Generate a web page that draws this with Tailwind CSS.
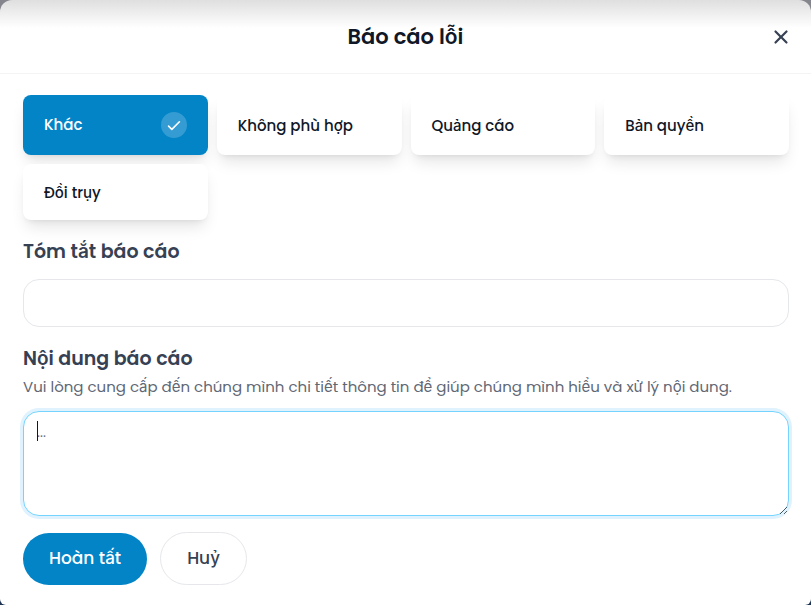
<!DOCTYPE html>
<html lang="vi">
<head>
<meta charset="utf-8">
<meta name="viewport" content="width=device-width, initial-scale=1">
<title>Báo cáo lỗi</title>
<script src="https://cdn.jsdelivr.net/npm/@tailwindcss/browser@4"></script>
</head>
<body class="h-screen overflow-hidden bg-linear-to-b from-[#85858d] from-50% to-[#1f3352] to-50% font-[Poppins,Inter,sans-serif] text-gray-900">
<main role="dialog" aria-labelledby="title" class="flex min-h-full flex-col rounded-t-xl rounded-b-md bg-white bg-linear-to-b from-[#dfdfdf] to-white to-[28px]">
  <header class="grid grid-cols-[1fr_auto_1fr] items-center border-b border-gray-100 px-[18px] py-5">
    <h1 id="title" class="col-start-2 text-[21px] leading-[33px] font-semibold">Báo cáo lỗi</h1>
    <button type="button" aria-label="Đóng" class="flex size-6 items-center justify-center justify-self-end text-gray-700">
      <svg class="size-[22px]" viewBox="0 0 20 20" fill="currentColor"><path fill-rule="evenodd" clip-rule="evenodd" d="M4.293 4.293a1 1 0 011.414 0L10 8.586l4.293-4.293a1 1 0 111.414 1.414L11.414 10l4.293 4.293a1 1 0 01-1.414 1.414L10 11.414l-4.293 4.293a1 1 0 01-1.414-1.414L8.586 10 4.293 5.707a1 1 0 010-1.414z"/></svg>
    </button>
  </header>
  <form class="flex flex-col pt-[21px] pr-[22px] pl-[23px]">
    <div role="radiogroup" aria-label="Lý do" class="grid grid-cols-4 gap-[9px] text-[15px] font-medium">
      <label class="flex h-[60px] items-center justify-between rounded-lg bg-[#0284c7] px-[21px] text-white shadow-lg">
        <input type="radio" name="reason" checked class="sr-only">Khác
        <svg class="size-[26px]" viewBox="0 0 24 24" fill="none"><circle cx="12" cy="12" r="12" fill="#fff" fill-opacity=".2"/><path d="M7 13l3 3 7-7" stroke="#fff" stroke-width="1.5" stroke-linecap="round" stroke-linejoin="round"/></svg>
      </label>
      <label class="flex h-[60px] items-center rounded-lg bg-white px-[21px] pt-[3px] whitespace-nowrap shadow-lg"><input type="radio" name="reason" class="sr-only">Không phù hợp</label>
      <label class="flex h-[60px] items-center rounded-lg bg-white px-[21px] pt-[3px] whitespace-nowrap shadow-lg"><input type="radio" name="reason" class="sr-only">Quảng cáo</label>
      <label class="flex h-[60px] items-center rounded-lg bg-white px-[21px] pt-[3px] whitespace-nowrap shadow-lg"><input type="radio" name="reason" class="sr-only">Bản quyền</label>
      <label class="flex h-14 items-center rounded-lg bg-white px-[21px] pt-[3px] whitespace-nowrap shadow-lg"><input type="radio" name="reason" class="sr-only">Đồi trụy</label>
    </div>
    <label for="summary" class="mt-4 text-[19px] leading-8 font-semibold text-gray-700">Tóm tắt báo cáo</label>
    <input id="summary" type="text" class="mt-[11px] h-12 w-full rounded-2xl border border-gray-200 bg-white px-3 outline-none">
    <label for="content" class="mt-4 text-[19px] leading-8 font-semibold text-gray-700">Nội dung báo cáo</label>
    <p id="hint" class="text-[15px] leading-6 text-[#5f6875]">Vui lòng cung cấp đến chúng mình chi tiết thông tin để giúp chúng mình hiểu và xử lý nội dung.</p>
    <div class="relative mt-3 flex">
      <textarea id="content" aria-describedby="hint" placeholder="..." class="h-[105px] w-full resize-y rounded-2xl border border-sky-300 bg-white px-[13px] py-2 text-sm leading-6 caret-transparent ring-3 ring-sky-100 outline-none placeholder:text-gray-500"></textarea>
      <span aria-hidden="true" class="absolute top-[10px] left-[14px] h-5 w-px bg-gray-900"></span>
    </div>
    <div class="mt-4 flex items-center gap-[13px] text-[17px] font-medium">
      <button type="submit" class="h-[52px] rounded-full bg-[#0284c7] px-[26px] text-white">Hoàn tất</button>
      <button type="button" class="h-[53px] rounded-full border border-gray-200 bg-white px-[26px] text-gray-700">Huỷ</button>
    </div>
  </form>
</main>
</body>
</html>
